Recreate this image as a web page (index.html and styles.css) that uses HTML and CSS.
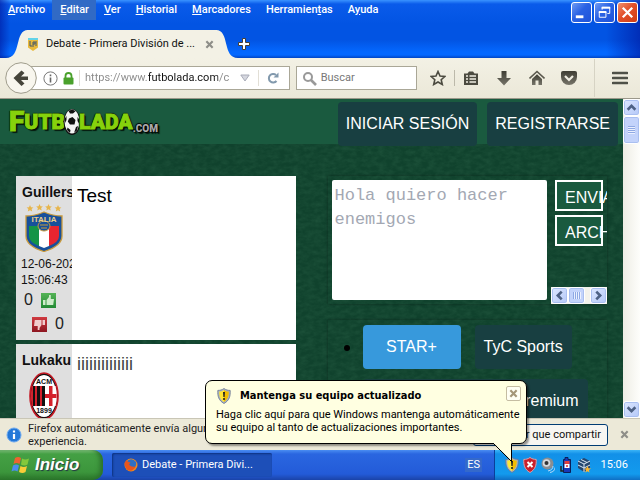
FILE: index.html
```
<!DOCTYPE html>
<html lang="es">
<head>
<meta charset="utf-8">
<title>Debate - Primera División</title>
<link rel="stylesheet" href="styles.css">
</head>
<body>
<svg class="defs" aria-hidden="true">
  <defs>
    <linearGradient id="ink" x1="0" y1="0" x2="0" y2="1"><stop offset="0" stop-color="#3f3e34"/><stop offset="1" stop-color="#77756a"/></linearGradient>
    <symbol id="shield" viewBox="0 0 14 16">
      <path d="M7 .5C5 2 3 2.400 .8 2.400c-.3 5.600.7 10 6.200 13.100 5.500-3.100 6.500-7.500 6.200-13.100C11 2.400 9 2 7 .5z" fill="#a9b3c4" stroke="#68768f" stroke-width=".8"/>
      <path d="M7 2C5.500 3 4 3.500 2.200 3.600 2.100 8 3 11.500 7 14z" fill="#ffe634"/><path d="M7 2c1.500 1 3 1.500 4.800 1.600C11.900 8 11 11.500 7 14z" fill="#f2bd00"/>
      <path d="M6 4h2l-.4 5H6.400z" fill="#222"/><circle cx="7" cy="11" r="1.100" fill="#222"/>
    </symbol>
    <symbol id="chev" viewBox="0 0 10 10"><path d="M1.500 3l3.500 3.500L8.500 3" fill="none" stroke="#4d6185" stroke-width="2.400"/></symbol>
    <symbol id="cross" viewBox="0 0 10 10"><path d="M1.500 1.500l7 7m0-7l-7 7" fill="none" stroke="currentColor" stroke-width="2.400"/></symbol>
  </defs>
</svg>

<header class="titlebar">
  <div class="menurow">
    <nav class="menu">
      <button><u>A</u>rchivo</button><button class="on"><u>E</u>ditar</button><button><u>V</u>er</button><button><u>H</u>istorial</button><button><u>M</u>arcadores</button><button>Herramien<u>t</u>as</button><button>A<u>y</u>uda</button>
    </nav>
    <div class="winctl">
      <button aria-label="Minimizar"><svg viewBox="0 0 20 20"><path d="M4 13h8v3H4z" fill="#fff"/></svg></button>
      <button aria-label="Restaurar"><svg viewBox="0 0 20 20" fill="none" stroke="#fff"><path d="M7.500 7V4.500h8V11H13" /><path d="M7 5h9" stroke-width="2"/><path d="M4.500 9.500h7v5.500h-7z"/><path d="M4 9.500h8" stroke-width="2"/></svg></button>
      <button class="close" aria-label="Cerrar"><svg viewBox="0 0 20 20"><path d="M5 5l10 10M15 5L5 15" stroke="#fff" stroke-width="2.400"/></svg></button>
    </div>
  </div>
  <div class="tabrow">
    <svg class="curve" viewBox="0 0 22 28"><path d="M0 28C16 28 8 0 22 0V28z" fill="#f3f1e5"/></svg>
    <div class="tab">
      <svg class="fav" viewBox="0 0 12 15"><path d="M1 1h10v9.500L6 14l-5-3.500z" fill="#e9b93b"/><path d="M1 1h10v2H1z" fill="#63d3e8"/><path d="M3 4v5h2M6 10V5h2v2H6M9 4v5" stroke="#42576b" fill="none"/></svg>
      <span>Debate - Primera División de ...</span>
      <button class="x" aria-label="Cerrar pestaña"><svg viewBox="0 0 10 10"><use href="#cross"/></svg></button>
    </div>
    <svg class="curve" viewBox="0 0 22 28"><path d="M22 28C6 28 14 0 0 0V28z" fill="#f3f1e5"/></svg>
    <button class="plus" aria-label="Nueva pestaña"><svg viewBox="0 0 12 12"><path d="M4.500 .5h3v4h4v3h-4v4h-3v-4h-4v-3h4z" fill="#fff" stroke="#443f36"/></svg></button>
  </div>
</header>

<div class="toolbar">
  <button class="back" aria-label="Atrás"><svg viewBox="0 0 32 32"><circle cx="16" cy="16" r="15.300" fill="#f8f6ee" stroke="#9f9c8c"/><path d="M16.500 8.500l3 2.500-3.500 3.500h7v3.500h-7l3.500 3.500-3 2.500L8.500 16z" fill="#45443a"/></svg></button>
  <div class="url">
    <svg class="i15" viewBox="0 0 15 15"><circle cx="7.500" cy="7.500" r="6.600" fill="none" stroke="#777"/><path d="M7.500 6.500v5M7.500 3.500v1.800" stroke="#666" stroke-width="1.600"/></svg>
    <svg class="lock" viewBox="0 0 11 13"><path d="M2.500 6V4a3 3 0 016 0v2" fill="none" stroke="#4aa12c" stroke-width="1.800"/><rect x=".5" y="5.500" width="10" height="7" rx="1" fill="#4aa12c"/></svg>
    <i class="sep"></i>
    <input class="addr" aria-label="Dirección" value="https://www.futbolada.com/c">
    <svg class="drop" viewBox="0 0 10 8"><path d="M.8 1h8.400L5 7z" fill="#d5d7df" stroke="#a9acb8"/></svg>
    <i class="sep"></i>
    <svg class="reload" viewBox="0 0 12 12"><path d="M9.500 9A4.300 4.300 0 119 3" fill="none" stroke="#8299ad" stroke-width="2"/><path d="M6.500 5.500h5V.5z" fill="#8299ad"/></svg>
  </div>
  <div class="find">
    <svg class="i15" viewBox="0 0 15 15"><circle cx="6" cy="6" r="4" fill="none" stroke="#999" stroke-width="2"/><path d="M9 9l5 5" stroke="#999" stroke-width="2.600"/></svg>
    <input aria-label="Buscar" placeholder="Buscar">
  </div>
  <div class="tools">
    <button aria-label="Marcar"><svg viewBox="0 0 16 16"><path d="M8 1.500l2 4.500 4.800.5-3.600 3.200 1.100 4.800L8 12l-4.300 2.500 1.100-4.800L1.200 6.500 6 6z" fill="none" stroke="#4c4b40" stroke-width="1.600"/></svg></button>
    <i class="sep dark"></i>
    <button class="list" aria-label="Lista"><svg viewBox="0 0 16 16"><path d="M1 3.500h3.500L6 1.500h4l1.500 2H15V15H1z" fill="#4c4b40"/><path d="M3 6h2m1.500 0H13M3 9h2m1.500 0H13M3 12h2m1.500 0H13" stroke="#f1efe3" stroke-width="1.600"/></svg></button>
    <button aria-label="Descargas"><svg viewBox="0 0 16 16"><path d="M5.500 1h5v7H15l-7 7.500L1 8h4.500z" fill="url(#ink)"/></svg></button>
    <button aria-label="Inicio"><svg viewBox="0 0 16 16"><path d="M.5 8.500L8 1.500l7.500 7" fill="none" stroke="#5b594e" stroke-width="1.600"/><path d="M3 9l5-4.800L13 9v6H9.500v-4.500h-3V15H3z" fill="url(#ink)"/></svg></button>
    <button aria-label="Pocket"><svg viewBox="0 0 16 16"><path d="M2 1h12q2 0 2 2v4a8 8 0 01-16 0V3q0-2 2-2z" fill="url(#ink)"/><path d="M4 6l4 4 4-4" fill="none" stroke="#f1efe3" stroke-width="2.200"/></svg></button>
    <i class="sep tall"></i>
    <button aria-label="Menú"><svg viewBox="0 0 16 16"><path d="M1 3h14M1 8h14M1 13h14" stroke="#4f5148" stroke-width="2.600" stroke-linecap="round"/></svg></button>
  </div>
</div>

<div class="viewport">
  <main class="page">
    <svg class="grain" aria-hidden="true"><filter id="n"><feTurbulence type="fractalNoise" baseFrequency=".14 .25" numOctaves="3" seed="4"/><feColorMatrix values="0 0 0 0 .1  0 0 0 0 .32  0 0 0 0 .18  1.200 0 0 0 -.35"/></filter><rect width="100%" height="100%" filter="url(#n)"/></svg>
    <div class="sitehead">
      <a class="logo" href="#" aria-label="Futbolada.com"><b class="cap">F</b><b>UTB</b><svg viewBox="0 0 18 28"><ellipse cx="9" cy="14" rx="8.500" ry="13" fill="#111"/><ellipse cx="9" cy="13.500" rx="7.500" ry="12" fill="#f4f4f4"/><path d="M6 10.500L9.500 9l3 3-1 4.500H7l-2.200-3zM5.500 2.800l4-1.300 3 1.800-2.500 2.200H7zM1.500 11l2-3v4l-1.500 3zM16.500 12l-2-3V13l1.500 2.500zM4.500 19.500l3 2.500-.5 3-3-3zM13 19l2-1-1 4.500-3 2.500z" fill="#111"/></svg><b>LADA</b><small>.COM</small></a>
      <a class="chip" href="#">INICIAR SESIÓN</a><a class="chip" href="#">REGISTRARSE</a>
    </div>
    <div class="cols">
      <section class="posts">
        <article class="post">
          <aside>
            <strong>Guillers</strong>
            <svg class="crest" viewBox="0 0 38 48">
              <g fill="#e7b54b"><path d="M5 1l1 2.200 2.400.2-1.800 1.600.6 2.400L5 6.200 2.800 7.400l.6-2.400L1.600 3.400 4 3.200z"/><path d="M14.500 0l1 2.200 2.400.2-1.800 1.600.6 2.400-2.200-1.200-2.200 1.200.6-2.400L11.100 2.400l2.400-.2z"/><path d="M23.500 0l1 2.200 2.400.2-1.800 1.600.6 2.400-2.200-1.200-2.200 1.200.6-2.400-1.800-1.600 2.400-.2z"/><path d="M33 1l1 2.200 2.400.2-1.800 1.600.6 2.400L33 6.200l-2.200 1.200.6-2.400-1.800-1.600 2.400-.2z"/></g>
              <path d="M1 12Q10 12 19 8q9 4 18 4v20q0 10-18 15.500Q1 42 1 32z" fill="#17509b" stroke="#c99a3c" stroke-width="1.300"/>
              <path d="M4 20h10v22Q4 38 4 32z" fill="#159447"/><path d="M14 20h10v22l-5 2-5-2z" fill="#fff"/><path d="M24 20h10v12q0 6-10 10z" fill="#e82530"/>
              <path d="M3 18h32v4H3z" fill="#17509b"/><ellipse cx="19" cy="22" rx="6" ry="5" fill="#17509b" stroke="#c99a3c"/><path d="M15 21h8m-7 3h6" stroke="#c99a3c"/>
              <text x="19" y="18" text-anchor="middle" class="italia">ITALIA</text>
            </svg>
            <time>12-06-2022 15:06:43</time>
            <div class="vote">0 <button class="up" aria-label="Me gusta"><svg viewBox="0 0 15 15"><path d="M2 7h2.500v5H2zM5.500 7L8 4V2h1.800v4H13l-.8 6H5.500z" fill="#cfeccb"/></svg></button></div>
            <div class="vote right"><button class="down" aria-label="No me gusta"><svg viewBox="0 0 15 15"><path d="M13 8h-2.500V3H13zM9.500 8L7.500 11v2H5.700V9H2l.8-6h6.700z" fill="#f0cccc"/></svg></button> 0</div>
          </aside>
          <p>Test</p>
        </article>
        <article class="post">
          <aside>
            <strong>Lukaku</strong>
            <svg class="crest milan" viewBox="0 0 30 48">
              <ellipse cx="15" cy="24" rx="14" ry="23" fill="#111" stroke="#c41824" stroke-width="1.600"/><ellipse cx="15" cy="24" rx="12.500" ry="21" fill="#fff"/>
              <path d="M3 14h24q2 10 0 20H3q-2-10 0-20z" fill="#d5202b"/><path d="M4 14h2v20H4zM8 14h3v20H8zM13 14h3v20h-3z" fill="#111"/><path d="M16 14h10.500q2.500 10 0 20H16z" fill="#fff"/><path d="M16 22h11.500v4H16zM20 14h3.500v20H20z" fill="#d5202b"/>
              <text x="15" y="12" text-anchor="middle" class="acm">ACM</text><text x="15" y="41" text-anchor="middle" class="acm">1899</text>
            </svg>
          </aside>
          <p class="thin">iiiiiiiiiiiiii</p>
        </article>
      </section>
      <section class="side">
        <form class="panel compose">
          <textarea aria-label="Mensaje" placeholder="Hola quiero hacer enemigos"></textarea>
          <div class="actions">
            <button type="button">ENVIAR</button><button type="button">ARCHIVO</button>
            <div class="hbar"><button type="button" class="sb left" aria-label="Izquierda"><svg viewBox="0 0 10 10"><use href="#chev"/></svg></button><span class="sb grip"></span><button type="button" class="sb rightw" aria-label="Derecha"><svg viewBox="0 0 10 10"><use href="#chev"/></svg></button></div>
          </div>
        </form>
        <div class="panel channels">
          <ul><li><button class="star">STAR+</button><button>TyC Sports</button><button class="prem">Premium</button></li></ul>
        </div>
      </section>
    </div>
  </main>
  <div class="vbar"><button class="sb upw" aria-label="Subir"><svg viewBox="0 0 10 10"><use href="#chev"/></svg></button><span class="sb thumb"></span><button class="sb end" aria-label="Bajar"><svg viewBox="0 0 10 10"><use href="#chev"/></svg></button></div>
</div>

<div class="notice">
  <svg class="info" viewBox="0 0 16 16"><circle cx="8" cy="8" r="7" fill="#2478d8" stroke="#6eaaf0"/><path d="M8 7v5M8 3.500v2" stroke="#fff" stroke-width="2.200"/></svg>
  <p>Firefox automáticamente envía algunos<br>experiencia.</p>
  <button class="share">Elegir que compartir</button>
  <button class="x" aria-label="Cerrar aviso"><svg viewBox="0 0 10 10"><use href="#cross"/></svg></button>
</div>

<footer class="taskbar">
  <button class="start"><svg viewBox="0 0 20 18"><path d="M4 2q3-2 6 0L8.500 8q-3-2-6 0z" fill="#ef6230"/><path d="M11 2.500q3 2 7 0L16.500 8.500q-3 2-6.500 0z" fill="#83c83c"/><path d="M2 9.500q3-2 6 0L6.500 15.500q-3-2-6 0z" fill="#4b8df0"/><path d="M9.500 10q3 2 6.500 0l-1.500 6q-3 2-6.500 0z" fill="#f9cc38"/></svg>Inicio</button>
  <button class="task"><svg viewBox="0 0 14 14"><circle cx="7" cy="7" r="6.500" fill="#f08a1c"/><path d="M3 3Q8-1 12 4q1 5-3 6-5 0-5-4z" fill="#2c6fc4"/><path d="M.5 5l2-3q1 2 4 2.500L5 6.500q2 3 7 2-3 5-7 4T.5 5z" fill="#e8541c"/></svg>Debate - Primera Divi...</button>
  <span class="lang">ES</span>
  <div class="tray">
    <svg viewBox="0 0 14 16"><use href="#shield"/></svg>
    <svg viewBox="0 0 14 16"><path d="M7 .5C5 2 3 2.400.8 2.400c-.3 5.600.7 10 6.200 13.100 5.500-3.100 6.500-7.500 6.200-13.100C11 2.400 9 2 7 .5z" fill="#c9202c" stroke="#dba3ab"/><path d="M4.500 5l5 5m0-5l-5 5" stroke="#fff" stroke-width="2"/></svg>
    <svg viewBox="0 0 14 16"><circle cx="6.500" cy="6.500" r="6" fill="#8a8d92"/><circle cx="5.500" cy="6" r="3.800" fill="#d8dadd"/><circle cx="5.500" cy="6" r="2" fill="#333"/><path d="M7 14q5-1 5-5M9 15.500q5-1 5-5" stroke="#b9d9f7" fill="none"/></svg>
    <svg viewBox="0 0 14 16"><path d="M6 .5h3v2h2.500v13h-7V2.500H6z" fill="#1638b8" stroke="#0b1e59"/><path d="M5.500 4h5v3h-5z" fill="#e04040"/><path d="M5.500 7h5v4h-5z" fill="#fff"/><path d="M7 9h2M8 8v2" stroke="#d33"/><path d="M2 9v5h2.500" stroke="#222" stroke-width="1.500" fill="none"/></svg>
    <svg viewBox="0 0 14 16"><path d="M7 1l6 3v7l-6 4-6-4V4z" fill="#26466f"/><path d="M1 4l6 3 6-3M7 7v8M1 8l6 3 6-3M4 2.500l6 3" stroke="#dce7f3" fill="none"/><path d="M10.500 9l1 2.200 2.500.3-2 1.500.5 2.500-2-1.200-2 1.200.5-2.500-1.500-1.500 2-.3z" fill="#ffb52b"/></svg>
    <time>15:06</time>
  </div>
</footer>

<div class="balloon" role="status">
  <h2><svg viewBox="0 0 14 16"><use href="#shield"/></svg>Mantenga su equipo actualizado</h2>
  <p>Haga clic aquí para que Windows mantenga automáticamente su equipo al tanto de actualizaciones importantes.</p>
  <button class="bx" aria-label="Cerrar"><svg viewBox="0 0 10 10"><use href="#cross"/></svg></button>
  <svg class="tail" viewBox="0 0 22 22"><path d="M1 0v1.500l18 18V1.500V0z" fill="#ffffe1"/><path d="M.5 1.500l18 18v-18" fill="none" stroke="#000"/></svg>
</div>
</body>
</html>
```

FILE: styles.css
```
* { box-sizing: border-box; }
html, body { height: 100%; }
body {
  margin: 0; display: flex; flex-direction: column; overflow: hidden; position: relative;
  font: 11px/14px Roboto, "Noto Sans", sans-serif; color: #111;
}
button { font: inherit; color: inherit; border: 0; background: none; padding: 0; margin: 0; }
input, textarea { font: inherit; border: 0; padding: 0; outline: 0; background: none; min-width: 0; }
p, h2, ul { margin: 0; }
svg { display: block; flex: none; }
.defs { position: absolute; width: 0; height: 0; }

/* title bar */
.titlebar {
  background: linear-gradient(90deg, rgba(0,25,160,.6), transparent 10px, transparent calc(100% - 34px), rgba(0,25,160,.65)), linear-gradient(#3a93ff 0, #0a5bea 4px, #0254e3 24px, #0254e3 40px, #0468ff 52px, #0468ff 55px, #0145c4 58px);
  height: 58px; display: flex; flex-direction: column; justify-content: space-between; flex: none;
}
.menurow { display: flex; justify-content: space-between; }
.menu { display: flex; color: #fff; font-weight: 500; }
.menu button { height: 20px; padding: 0 7px 0 8px; }
.menu .on { background: #316ac5; }
.winctl { display: flex; gap: 2px; padding: 2px 2px 0 0; }
.winctl button { width: 21px; height: 21px; border: 1px solid #fff; border-radius: 3px; background: linear-gradient(135deg, #6f9bf3, #2a62e4 45%, #1f53d8); }
.winctl .close { background: linear-gradient(135deg, #f0906f, #e2502a 45%, #cf3d15); }
.tabrow { display: flex; height: 28px; padding-left: 6px; }
.curve { width: 22px; height: 28px; }
.tab { display: flex; align-items: center; background: #f3f1e5; width: 190px; margin: 0 -1px; }
.tab span { flex: 1; padding-left: 7px; white-space: nowrap; }
.fav { width: 12px; height: 15px; }
.x { width: 9px; height: 9px; color: #8e8e88; }
.tab .x { margin-right: 3px; }
.plus { width: 12px; }

/* toolbar */
.toolbar { display: flex; align-items: center; height: 41px; padding: 0 12px 0 5px; background: linear-gradient(#f3f1e5, #ebe8d8); border-bottom: 1px solid #9b988a; flex: none; }
.back { width: 32px; height: 32px; z-index: 1; }
.url, .find { height: 24px; min-width: 0; background: #fff; border: 1px solid #aaa797; display: flex; align-items: center; }
.url { flex: 260 1 0; margin-left: -6px; padding: 0 10px 0 11px; gap: 5px; }
.i15 { width: 15px; height: 15px; }
.lock { width: 11px; height: 13px; }
.sep { width: 1px; height: 16px; background: #e2dfd6; flex: none; }
.sep.dark { background: #bcb9aa; }
.sep.tall { height: 38px; background: #d6d3c4; }
.addr { flex: 1; color: transparent; background: linear-gradient(90deg, #888 62px, #111 62px, #111 133px, #888 133px); background-clip: text; -webkit-background-clip: text; }
.drop { width: 10px; height: 8px; }
.reload { width: 12px; height: 12px; }
.url .drop + .sep { margin: 0 3px; }
.find { flex: 121 1 0; margin-left: 6px; padding: 0 5px; gap: 4px; }
.find input { flex: 1; }
.find input::placeholder { color: #777; opacity: 1; }
.tools { display: flex; flex: 218 1 0; align-items: center; justify-content: space-between; padding-left: 13px; }
.tools button, .tools svg { width: 16px; height: 16px; }
.tools .dark, .tools .list { margin-left: -9px; }

/* page */
.viewport { flex: 1; display: flex; min-height: 0; }
.page { flex: 1; min-width: 0; overflow: hidden; background: #10422d; position: relative; font: 16px/24px "Liberation Sans", Arial, sans-serif; }
.grain { position: absolute; inset: 0; width: 100%; height: 100%; opacity: .22; }
.sitehead { position: relative; display: flex; gap: 10px; height: 45px; padding: 3px 5px 0 9px; background: #1a5a3f; }
.logo { display: flex; margin-right: auto; height: 40px; align-items: center; color: #86d20c; text-decoration: none; font: 900 21px/40px Roboto, Arial, sans-serif; text-shadow: 1px 1px 1px #000, -1px 0 1px #000, 0 -1px 1px #000, 2px 2px 1px #061c10; -webkit-text-stroke: 1px #86d20c; }
.logo b { font-weight: 900; }
.logo .cap { font-size: 28px; }
.logo svg { width: 18px; height: 28px; margin: 0 -2px; }
.logo small { font-size: 10px; line-height: 14px; align-self: flex-end; padding-bottom: 6px; color: #aaa; -webkit-text-stroke: 0; }
.chip { height: 44px; flex: none; padding: 0 8px; border-radius: 4px; background: #183f41; color: #fff; line-height: 44px; text-decoration: none; }
.cols { position: relative; display: grid; grid-template-columns: 1fr 1fr; gap: 32px; padding: 32px 16px; }
.posts { display: flex; flex-direction: column; gap: 4px; }
.post { display: flex; height: 164px; background: #fff; }
.post aside { width: 56px; background: #dfdfdf; overflow: hidden; flex: none; padding: 8px 5px; }
.post strong { display: block; font-size: 14px; line-height: 16px; padding-left: 1px; white-space: nowrap; }
.post p { padding: 8px 5px; font-size: 19px; color: #000; }
.post .thin { font-size: 18px; color: #444; }
.crest { width: 38px; height: 48px; margin: 4px 4px 0; }
.milan { width: 30px; margin-left: 8px; }
.italia { font: bold 8px "Liberation Sans", sans-serif; fill: #e9cf8a; }
.acm { font: bold 7px "Liberation Sans", sans-serif; fill: #111; }
.post time { display: block; font-size: 12px; line-height: 16px; margin-top: 4px; width: 62px; }
.vote { display: flex; align-items: center; gap: 8px; height: 24px; padding-left: 3px; color: #222; }
.vote.right { padding-left: 11px; }
.vote button { width: 15px; height: 15px; }
.up { background: linear-gradient(#55b356, #238a34); }
.down { background: linear-gradient(#d03a40, #8d1620); }
.side { display: flex; flex-direction: column; gap: 16px; min-width: 0; }
.panel { box-shadow: 0 0 3px rgba(0,0,0,.35); }
.compose { display: flex; height: 128px; padding: 4px 0 0 4px; gap: 4px; }
.compose textarea { flex: 1; height: 120px; background: #fff; border-radius: 2px; padding: 4px 3px; resize: none; font: 17px/24px "Liberation Mono", monospace; }
.compose textarea::placeholder { color: #a3a8b3; opacity: 1; }
.actions { width: 56px; display: flex; flex-direction: column; gap: 4px; overflow: hidden; padding-left: 4px; }
.actions > button { width: 48px; height: 31px; border: 2px solid #fff; background: #1a5a3f; color: #fff; text-align: left; padding: 4px 0 0 8px; white-space: nowrap; }
.hbar { margin: auto 0 0 -4px; display: flex; background: #f3f2ec; }
.hbar .rightw { margin-left: auto; }
.sb { width: 17px; height: 17px; border: 1px solid #fff; border-radius: 3px; background: linear-gradient(135deg, #dce7ff, #b4c8f8); box-shadow: inset 0 0 0 1px #a9bff0; flex: none; }
.sb svg { width: 11px; height: 11px; margin: auto; }
.left svg { transform: rotate(90deg); }
.rightw svg { transform: rotate(-90deg); }
.upw svg { transform: rotate(180deg); }
.grip { background: repeating-linear-gradient(90deg, #8fa9e4 0 1px, #eaf0ff 1px 2px) center / 8px 7px no-repeat, #c3d3fb; }
.vbar { width: 17px; display: flex; flex-direction: column; background: linear-gradient(90deg, #eeede5, #fefefb); }
.thumb { height: 28px; background: repeating-linear-gradient(#8fa9e4 0 1px, #eaf0ff 1px 2px) center / 7px 8px no-repeat, #c3d3fb; }
.vbar .end { margin-top: auto; }
.channels { padding: 5px 0 10px; }
.channels ul { padding: 0 0 0 35px; list-style: none; }
.channels li { position: relative; display: flex; flex-wrap: wrap; gap: 10px 14px; }
.channels li::before { content: ""; position: absolute; left: -19px; top: 20px; width: 6px; height: 6px; border-radius: 50%; background: #000; }
.channels button { height: 44px; padding: 0 9px; border-radius: 4px; background: #183f41; color: #fff; }
.channels .star { width: 98px; background: #3799dc; }
.channels .prem { width: 225px; text-align: right; }

/* notification bar */
.notice { display: flex; align-items: center; height: 32px; padding: 0 11px 0 6px; background: #ece9d8; border-top: 1px solid #c9c6b6; flex: none; }
.info { width: 16px; height: 16px; }
.notice p { flex: 1; padding-left: 6px; line-height: 13px; color: #222; white-space: nowrap; }
.share { height: 22px; width: 135px; text-align: right; padding: 0 6px; border: 1px solid #003c74; border-radius: 3px; background: #f7f6f2; white-space: nowrap; }
.notice .x { margin-left: 12px; }

/* taskbar */
.taskbar { display: flex; align-items: center; height: 30px; color: #fff; background: linear-gradient(#4a8df2 0, #2a66e0 4px, #235bd8 24px, #1a43a8 30px); flex: none; }
.start { display: flex; align-items: center; gap: 4px; width: 103px; height: 30px; padding-left: 11px; border-radius: 0 10px 10px 0; background: linear-gradient(#7fc07c 0, #44a044 4px, #3c963c 22px, #2a742a 30px); font: italic bold 17px/30px "Liberation Sans", sans-serif; text-shadow: 1px 1px 1px #234; box-shadow: inset -5px 0 5px -2px #2a6f2a; }
.start svg { width: 20px; height: 18px; }
.task { display: flex; align-items: center; gap: 4px; width: 160px; height: 24px; margin-left: 9px; padding-left: 12px; border-radius: 2px; background: #1d4fb8; box-shadow: inset 1px 1px 2px #0d327f; white-space: nowrap; }
.task svg { width: 14px; height: 14px; }
.lang { margin-left: auto; padding: 0 2px; background: #3469cb; }
.tray { display: flex; align-items: center; gap: 4px; width: 146px; height: 30px; margin-left: 12px; padding-left: 10px; background: linear-gradient(#3bb4f7 0, #1290e8 4px, #139aed 24px, #0f6fc4 30px); border-left: 1px solid #0b3f9a; }
.tray svg { width: 14px; height: 16px; }
.tray time { margin: 0 12px 0 auto; }

/* balloon over the tray */
.balloon { position: absolute; right: 113px; bottom: 36px; width: 322px; height: 64px; padding: 7px 4px 7px 10px; border: 1px solid #000; border-radius: 7px; background: #ffffe1; box-shadow: 2px 2px 2px rgba(0,0,0,.4); color: #000; line-height: 13px; }
.balloon h2 { display: flex; align-items: center; gap: 9px; padding-left: 1px; font: bold 11px/14px "DejaVu Sans Condensed", sans-serif; }
.balloon h2 svg { width: 14px; height: 16px; }
.balloon p { padding-top: 4px; }
.bx { position: absolute; right: 5px; top: 5px; width: 15px; height: 15px; border: 1px solid #c5bda2; border-radius: 2px; background: #fffff4; color: #a59778; }
.bx svg { width: 9px; height: 9px; margin: auto; }
.tail { position: absolute; width: 22px; height: 22px; right: 11px; top: 61px; }
```
